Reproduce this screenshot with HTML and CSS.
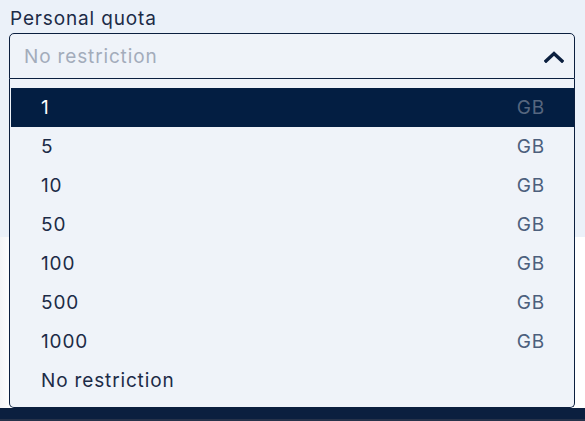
FILE: index.html
```html
<!DOCTYPE html>
<html>
<head>
<meta charset="utf-8">
<link rel="stylesheet" href="styles.css">
</head>
<body>
<div class="page">
  <section class="form-panel">
    <div class="label">Personal quota</div>
    <div class="field">
      <div class="select">
        <span class="placeholder">No restriction</span>
        <svg class="chevron" width="20" height="12" viewBox="0 0 20 12"><path d="M2 10 L10 2.5 L18 10" fill="none" stroke="#0b1f3f" stroke-width="3.4" stroke-linecap="square" stroke-linejoin="miter"/></svg>
      </div>
      <ul class="menu">
        <li class="opt active"><span>1</span><span class="unit">GB</span></li>
        <li class="opt"><span>5</span><span class="unit">GB</span></li>
        <li class="opt"><span>10</span><span class="unit">GB</span></li>
        <li class="opt"><span>50</span><span class="unit">GB</span></li>
        <li class="opt"><span>100</span><span class="unit">GB</span></li>
        <li class="opt"><span>500</span><span class="unit">GB</span></li>
        <li class="opt"><span>1000</span><span class="unit">GB</span></li>
        <li class="opt"><span>No restriction</span></li>
      </ul>
    </div>
  </section>
  <section class="content"></section>
  <footer class="bar"></footer>
</div>
</body>
</html>
```

FILE: styles.css
```css
html, body {
  margin: 0;
  padding: 0;
}
body {
  background: #ffffff;
  font-family: Inter, "Noto Sans", sans-serif;
  font-size: 19px;
  letter-spacing: 0.85px;
  color: #1c2b47;
  overflow: hidden;
}
.page {
  height: 421px;
  display: flex;
  flex-direction: column;
}
.form-panel {
  height: 237px;
  box-sizing: border-box;
  background: #ebf1f9;
  padding: 9px 10px 0 9px;
}
.label {
  line-height: 20px;
  margin: 0 0 4px 1px;
  color: #1c2b47;
}
.field {
  position: relative;
  width: 566px;
}
.select {
  height: 46px;
  box-sizing: border-box;
  border: 1px solid #0b1f3f;
  border-radius: 5px 5px 0 0;
  background: #eff3f9;
  display: flex;
  align-items: center;
  justify-content: space-between;
  padding: 1px 10px 0 14px;
}
.placeholder {
  color: #a3acbb;
}
.chevron {
  display: block;
}
.menu {
  position: absolute;
  top: 100%;
  left: 0;
  right: 0;
  margin: 0;
  list-style: none;
  box-sizing: border-box;
  border: 1px solid #0b1f3f;
  border-top: none;
  border-radius: 0 0 5px 5px;
  background: #eff3f9;
  padding: 9px 0 7px 1px;
  z-index: 2;
}
.opt {
  height: 39px;
  display: flex;
  align-items: center;
  justify-content: space-between;
  padding: 0 29px 0 30px;
  color: #1c2b47;
}
.opt .unit {
  color: #4c5f7c;
}
.opt.active {
  background: #031e42;
  color: #ffffff;
}
.opt.active .unit {
  color: #56667f;
}
.content {
  flex: 1;
  background: linear-gradient(90deg, #f4f5f7 0px, #ffffff 12px);
}
.bar {
  height: 13px;
  background: #0b1f3f;
  border-bottom: 2px solid #26324a;
  box-sizing: border-box;
}
```
